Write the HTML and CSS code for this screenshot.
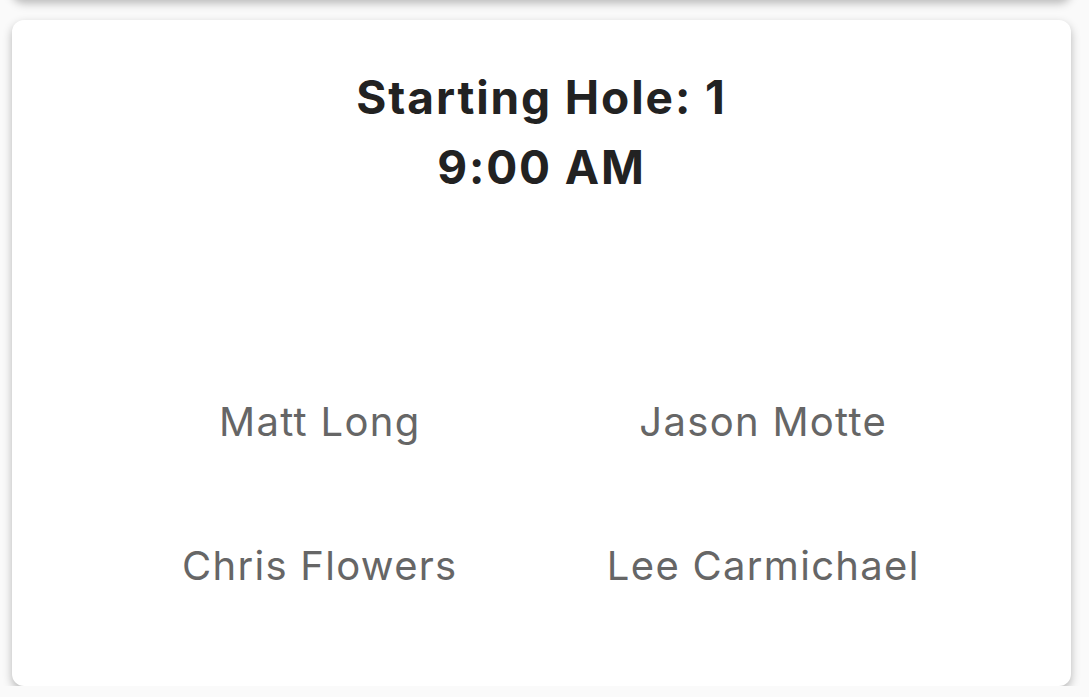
FILE: index.html
```html
<!DOCTYPE html>
<html lang="en">
<head>
<meta charset="utf-8">
<title>Tee Times</title>
<link rel="stylesheet" href="styles.css">
</head>
<body>
<main class="feed">
  <section class="card card--prev"></section>
  <section class="card">
    <header class="card-head">
      <h2 class="hole">Starting Hole: 1</h2>
      <p class="time">9:00 AM</p>
    </header>
    <ul class="players">
      <li>Matt Long</li>
      <li>Jason Motte</li>
      <li>Chris Flowers</li>
      <li>Lee Carmichael</li>
    </ul>
  </section>
</main>
</body>
</html>
```

FILE: styles.css
```css
html, body {
  margin: 0;
  padding: 0;
  background: #fafafa;
  font-family: Inter, "Noto Sans", "Liberation Sans", sans-serif;
  overflow: hidden;
}

.feed {
  display: flex;
  flex-direction: column;
  gap: 21px;
  padding: 0 18px 0 12px;
}

.card {
  background: #fff;
  border-radius: 12px;
  box-shadow: 0 4px 10px rgba(0, 0, 0, 0.28);
  height: 666px;
  box-sizing: border-box;
  display: flex;
  flex-direction: column;
}

/* the card above, scrolled almost out of view */
.card--prev {
  height: 120px;
  margin-top: -121px;
  flex: none;
}

.card-head {
  text-align: center;
  padding-top: 42px;
  color: #222;
}

.hole,
.time {
  margin: 0;
  font-size: 46px;
  font-weight: 700;
  line-height: 70px;
  letter-spacing: 1.9px;
}

.players {
  list-style: none;
  margin: 0;
  padding: 0 86px;
  display: grid;
  grid-template-columns: 1fr 1fr;
  row-gap: 98px;
  margin-top: 197px;
}

.players li {
  text-align: center;
  font-size: 40px;
  line-height: 46px;
  color: #666;
  letter-spacing: 1.3px;
}
```
